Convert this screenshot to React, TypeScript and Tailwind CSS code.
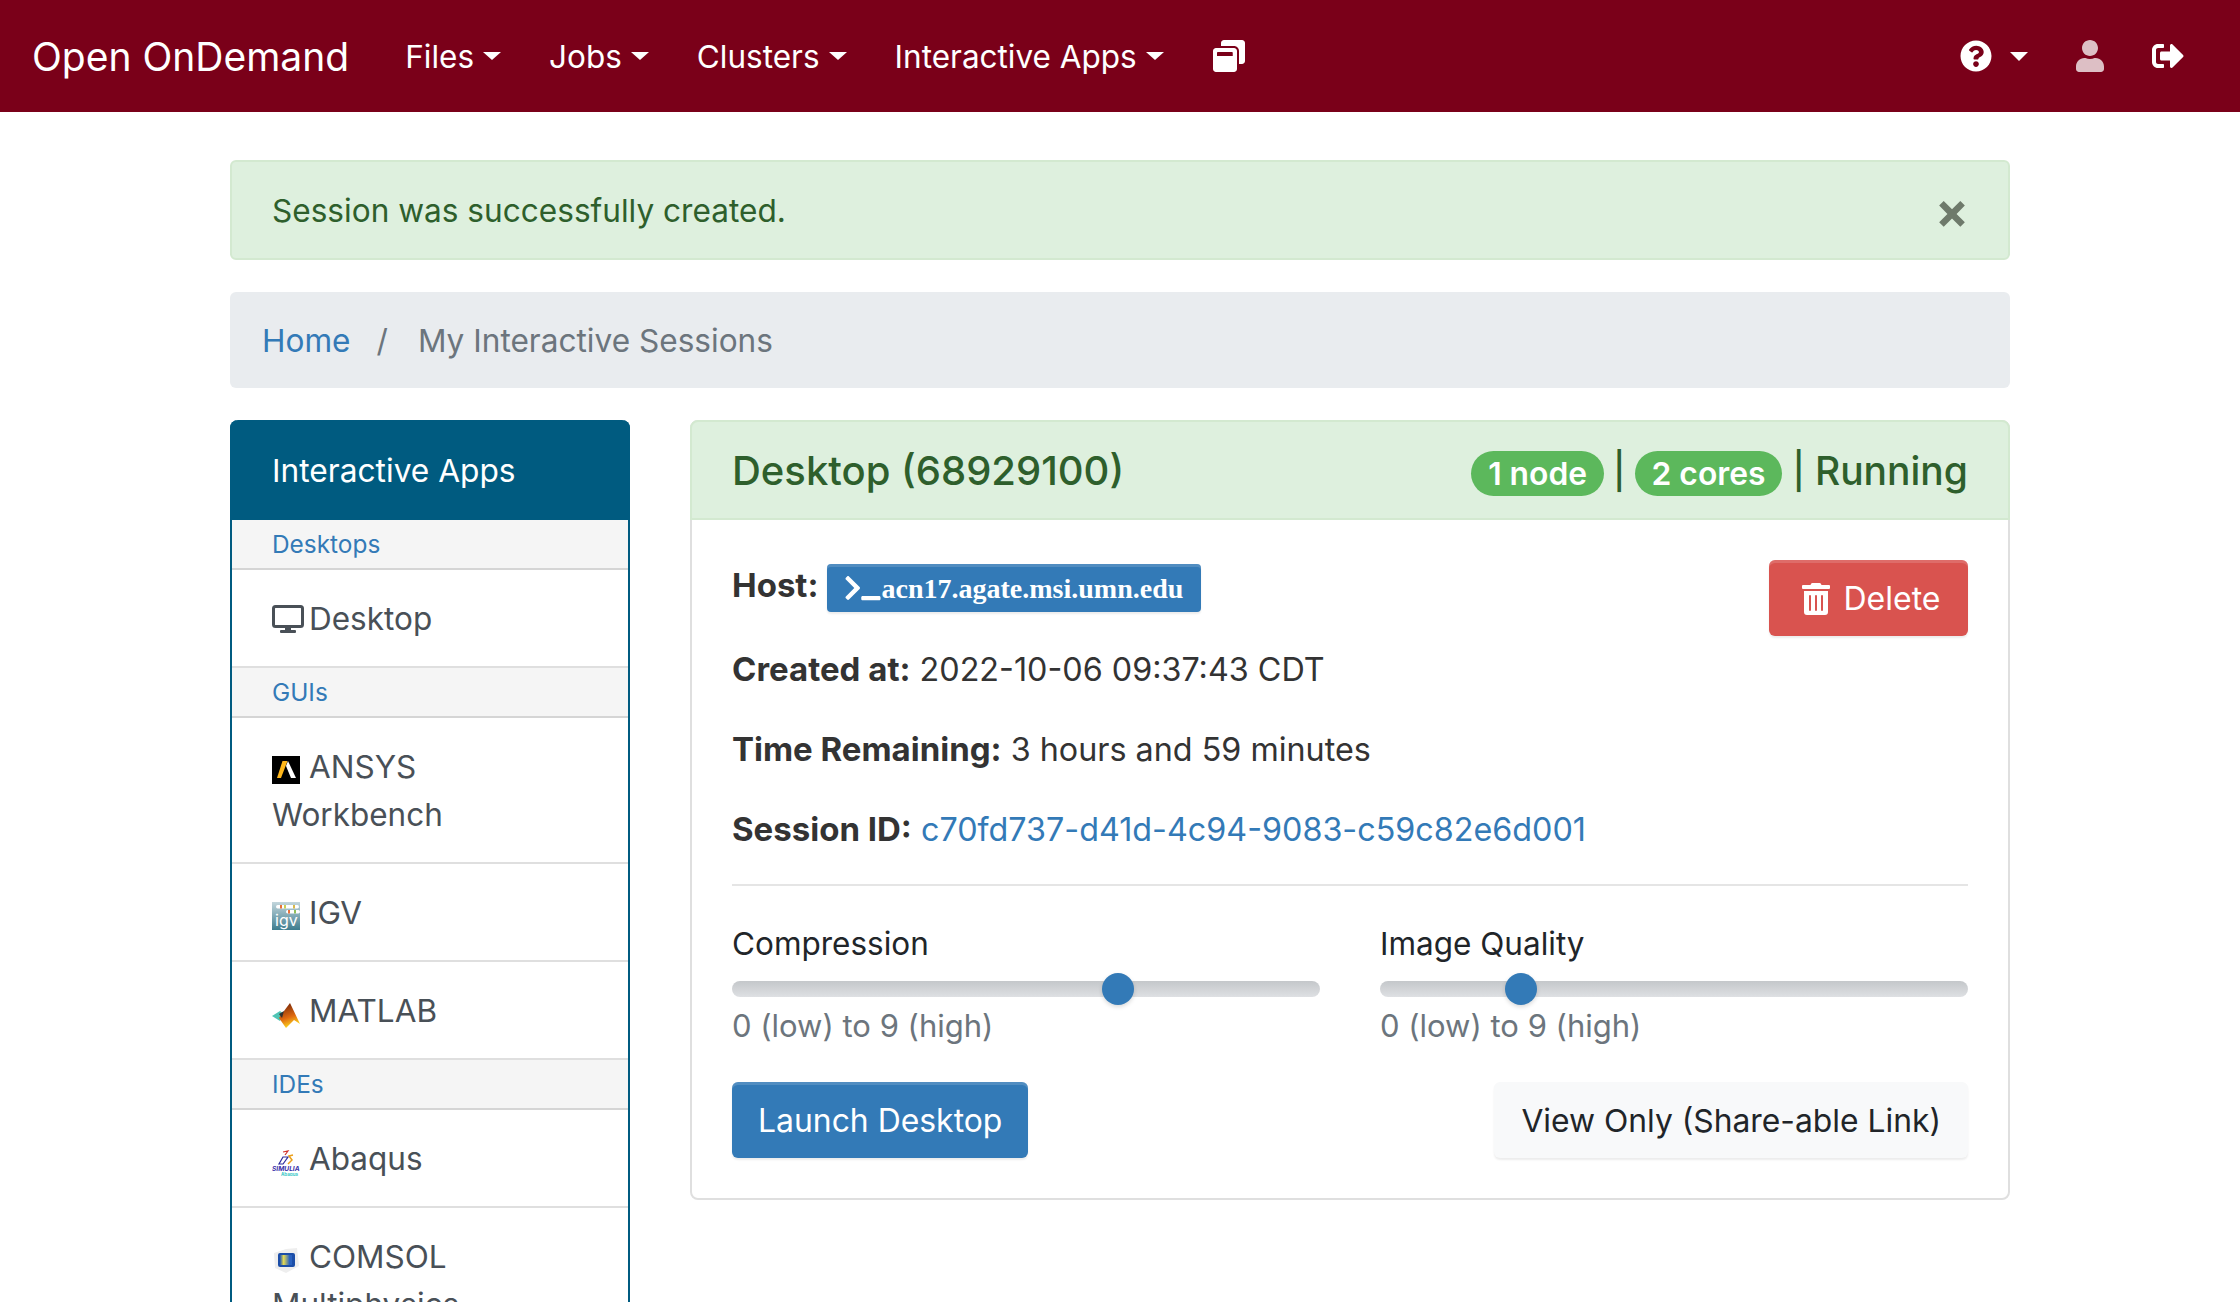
import { FaQuestionCircle, FaUser, FaSignOutAlt, FaWindowRestore, FaTrashAlt, FaTerminal } from "react-icons/fa";
import type { ReactNode } from "react";

const Caret = () => (
  <span className="ml-[9px] inline-block align-middle border-x-[9px] border-t-[8px] border-x-transparent border-t-white" />
);

const NavItem = ({ label }: { label: string }) => (
  <a className="flex items-center px-[12px] leading-none text-white">
    <span className="text-[31.5px] pt-[2px]">{label}</span>
    <Caret />
  </a>
);

const DesktopIcon = () => (
  <svg viewBox="0 0 32 28" className="w-[32px] h-[28px] -translate-y-[3px]">
    <rect x="1.5" y="1.5" width="29" height="20" rx="2" fill="none" stroke="#495057" strokeWidth="3" />
    <rect x="13" y="22" width="6" height="3" fill="#495057" />
    <rect x="8" y="25" width="16" height="3" rx="1" fill="#495057" />
  </svg>
);

const AnsysIcon = () => (
  <svg viewBox="0 0 28 28" className="w-[28px] h-[28px]">
    <rect width="28" height="28" fill="#000" />
    <path d="M5 22 L10.5 5 H15.5 L9 22 Z" fill="#ffb71b" />
    <path d="M16 5 L24 22 H19 L14 10 Z" fill="#fff" />
  </svg>
);

const IgvIcon = () => (
  <svg viewBox="0 0 28 28" className="w-[28px] h-[28px]">
    <defs>
      <linearGradient id="igvbg" x1="0" y1="0" x2="0" y2="1">
        <stop offset="0" stopColor="#c3d6dc" />
        <stop offset="1" stopColor="#3d7c8e" />
      </linearGradient>
    </defs>
    <rect width="28" height="28" fill="url(#igvbg)" />
    <rect x="4" y="3" width="23" height="3.5" rx="1.7" fill="#fff" />
    <rect x="14" y="8" width="14" height="3.5" rx="1.7" fill="#fff" />
    <rect x="8" y="3" width="2" height="3.5" fill="#e8703a" />
    <rect x="12" y="3" width="2" height="3.5" fill="#c9cf55" />
    <rect x="21" y="3" width="2" height="3.5" fill="#d8b84a" />
    <rect x="16" y="8" width="2" height="3.5" fill="#e8703a" />
    <rect x="22" y="8" width="2" height="3.5" fill="#8fbf5a" />
    <text x="3" y="24" fontSize="16" fill="#fff" fontFamily="Inter, sans-serif">igv</text>
  </svg>
);

const MatlabIcon = () => (
  <svg viewBox="0 0 28 28" className="w-[28px] h-[28px]">
    <defs>
      <linearGradient id="mlb" x1="0.2" y1="0" x2="0.5" y2="1">
        <stop offset="0" stopColor="#6e2208" />
        <stop offset="0.6" stopColor="#e06a10" />
        <stop offset="1" stopColor="#ffe020" />
      </linearGradient>
    </defs>
    <path d="M0 16 L8 11 L12 14 L8 21 Z" fill="#4fc4b4" />
    <path d="M7 18 L12 11 L18 3 L28 24 L22 20 L14 28 Z" fill="url(#mlb)" />
    <path d="M7 14 L12 11 L10 18 Z" fill="#333" />
  </svg>
);

const AbaqusIcon = () => (
  <svg viewBox="0 0 28 28" className="w-[28px] h-[28px]">
    <path d="M11 4 L16 3 L13 7" fill="none" stroke="#d0342c" strokeWidth="1.2" />
    <path d="M11 9 L16 9 L11 16 H7 Z" fill="none" stroke="#2c2c9c" strokeWidth="1.2" />
    <path d="M21 7 L17 8 L20 12 L16 16" fill="none" stroke="#eba01c" strokeWidth="1.5" />
    <text x="0" y="23" fontSize="6.6" fontWeight="700" fontStyle="italic" fill="#3a2fa8" fontFamily="Inter, sans-serif">SIMULIA</text>
    <text x="9" y="27.5" fontSize="4.5" fontWeight="700" fill="#37c6c6" fontFamily="Inter, sans-serif">Abaqus</text>
  </svg>
);

const ComsolIcon = () => (
  <svg viewBox="0 0 28 28" className="w-[28px] h-[28px]">
    <defs>
      <linearGradient id="cms" x1="0" y1="0" x2="1" y2="0">
        <stop offset="0" stopColor="#1e55b4" />
        <stop offset="0.3" stopColor="#e8dc50" />
        <stop offset="0.8" stopColor="#2a62c0" />
      </linearGradient>
    </defs>
    <path d="M2 7 L14 3 L25 2 L27 20 L14 27 L3 22 Z" fill="#eeeeee" />
    <rect x="6" y="7" width="17" height="14" rx="2" fill="#1c4ea8" />
    <rect x="8" y="9" width="12" height="10" fill="url(#cms)" />
  </svg>
);

const GroupHead = ({ label }: { label: string }) => (
  <div className="h-[50px] flex items-center bg-[#f5f5f5] border-b-2 border-[#d5d5d5] pl-[40px] pt-[1px] text-[24.4px] text-[#337ab7]">
    {label}
  </div>
);

const Item = ({ icon, children }: { icon: ReactNode; children: ReactNode }) => (
  <div className="border-b-2 border-[#dfdfdf] pl-[40px] pr-[24px] pt-[25px] pb-[23px] text-[31.5px] leading-[48px] text-[#495057]">
    <span className="inline-block w-[37px] align-[-6px]">{icon}</span>
    {children}
  </div>
);

const Slider = ({ label, left }: { label: string; left: string }) => (
  <div className="flex-1">
    <div className="text-[31.5px] leading-[48px] text-[#212529]">{label}</div>
    <div className="relative mt-[13px] h-[16px] rounded-full bg-[linear-gradient(#c4c7ca,#dee0e3)]">
      <div className={`absolute top-[-8px] ${left} w-[32px] h-[32px] rounded-full bg-[#337ab7] shadow-[0_2px_4px_rgba(0,0,0,0.15)]`} />
    </div>
    <div className="mt-[5px] text-[31px] leading-[48px] text-[#6c757d]">0 (low) to 9 (high)</div>
  </div>
);

const buttonShadow = "shadow-[inset_0_3px_0_rgba(255,255,255,0.15),0_2px_2px_rgba(0,0,0,0.075)]";

export default function App() {
  return (
    <div className="h-[1302px] overflow-hidden bg-white font-['Inter','Noto_Sans',sans-serif]">
      <nav className="h-[112px] bg-[#7a0019] flex items-center pl-[32px] pr-[56px] text-white">
        <a className="text-[39px] mr-[44px] pt-[2px]">Open OnDemand</a>
        <NavItem label="Files" />
        <div className="w-[24px]" />
        <NavItem label="Jobs" />
        <div className="w-[24px]" />
        <NavItem label="Clusters" />
        <div className="w-[24px]" />
        <NavItem label="Interactive Apps" />
        <a className="ml-[37px]">
          <FaWindowRestore className="w-[32px] h-[32px]" />
        </a>
        <div className="ml-auto flex items-center">
          <FaQuestionCircle className="w-[32px] h-[32px]" />
          <span className="ml-[18px] border-x-[9px] border-t-[9px] border-x-transparent border-t-white" />
          <FaUser className="ml-[48px] w-[28px] h-[32px] text-white/75" />
          <FaSignOutAlt className="ml-[48px] w-[32px] h-[32px]" />
        </div>
      </nav>

      <main className="mx-auto w-[1780px] pt-[48px]">
        <div className="h-[100px] flex items-center justify-between rounded-[6px] border-2 border-[#d3e9d0] bg-[#def0de] pl-[40px] pr-[39px] text-[31.6px] text-[#2e5f2c]">
          <span className="pt-[2px]">Session was successfully created.</span>
          <span className="text-[50px] leading-none font-bold text-[#6e7a6b]">×</span>
        </div>

        <div className="mt-[32px] h-[96px] flex items-center rounded-[6px] bg-[#e9ecef] pl-[32px] pt-[2px] text-[31.6px]">
          <a className="text-[#337ab7]">Home</a>
          <span className="ml-[26px] mr-[30px] text-[#6c757d]">/</span>
          <span className="text-[#6c757d]">My Interactive Sessions</span>
        </div>

        <div className="mt-[32px] flex gap-[60px] items-start">
          <aside className="w-[400px] shrink-0 rounded-t-[8px] border-x-2 border-[#005b80]">
            <div className="-mx-[2px] h-[100px] flex items-center rounded-t-[8px] bg-[#005b80] pl-[42px] pt-[2px] text-[31.7px] text-white">
              Interactive Apps
            </div>
            <GroupHead label="Desktops" />
            <Item icon={<DesktopIcon />}>Desktop</Item>
            <GroupHead label="GUIs" />
            <Item icon={<AnsysIcon />}>ANSYS<br />Workbench</Item>
            <Item icon={<IgvIcon />}>IGV</Item>
            <Item icon={<MatlabIcon />}>MATLAB</Item>
            <GroupHead label="IDEs" />
            <Item icon={<AbaqusIcon />}>Abaqus</Item>
            <Item icon={<ComsolIcon />}>COMSOL Multiphysics</Item>
          </aside>

          <section className="flex-1 rounded-[8px] border-2 border-[#dfdfdf]">
            <div className="-mx-[2px] -mt-[2px] h-[100px] flex items-center justify-between rounded-t-[8px] border-2 border-[#d3e9d0] bg-[#def0de] px-[40px] text-[#2e5f2c]">
              <span className="text-[40px] font-medium pt-[2px]">Desktop (68929100)</span>
              <span className="flex items-center text-[39px] font-medium pt-[2px]">
                <span className="flex items-center mt-[5px] h-[45px] rounded-full bg-[#5cb85c] px-[17px] text-[31.8px] font-semibold text-white">1 node</span>
                <span className="mx-[9px] text-[36px]">|</span>
                <span className="flex items-center mt-[5px] h-[45px] rounded-full bg-[#5cb85c] px-[17px] text-[31.8px] font-semibold text-white">2 cores</span>
                <span className="mx-[10px] text-[36px]">|</span>
                <span>Running</span>
              </span>
            </div>

            <div className="px-[40px] pt-[40px] pb-[40px]">
              <div className="flex justify-between items-start">
                <div className="text-[32.3px] text-[#333]">
                  <div className="flex items-center h-[52px]">
                    <b className="text-[33px]">Host:</b>
                    <span className={`ml-[9px] mt-[3px] flex items-center h-[48px] rounded-[4px] bg-[#337ab7] px-[18px] text-white font-['Liberation_Serif',serif] font-bold text-[28px] ${buttonShadow}`}>
                      <FaTerminal className="w-[36px] h-[28px]" />
                      <span className="pt-[2px]">acn17.agate.msi.umn.edu</span>
                    </span>
                  </div>
                </div>
                <a className={`flex items-center justify-center w-[199px] h-[76px] pl-[5px] pt-[2px] rounded-[6px] bg-[#d9534f] text-[32px] text-white ${buttonShadow}`}>
                  <FaTrashAlt className="w-[28px] h-[32px] mr-[14px]" />
                  Delete
                </a>
              </div>

              <div className="text-[32.3px] leading-[80px] text-[#333] -mt-[6px]">
                <div><b className="text-[33px] leading-none">Created at:</b> 2022-10-06 09:37:43 CDT</div>
                <div><b className="text-[33px] leading-none">Time Remaining:</b> 3 hours and 59 minutes</div>
                <div><b className="text-[33px] leading-none">Session ID:</b> <a className="text-[#337ab7]">c70fd737-d41d-4c94-9083-c59c82e6d001</a></div>
              </div>

              <hr className="mt-[14px] border-t-2 border-[#e5e5e5]" />

              <div className="mt-[34px] flex gap-[60px]">
                <Slider label="Compression" left="left-[370px]" />
                <Slider label="Image Quality" left="left-[125px]" />
              </div>

              <div className="mt-[32px] flex justify-between">
                <a className={`flex items-center h-[76px] rounded-[6px] bg-[#337ab7] px-[26px] pt-[2px] text-[31.9px] text-white ${buttonShadow}`}>Launch Desktop</a>
                <a className="flex items-center h-[76px] rounded-[6px] bg-[#f8f9fa] px-[27px] pt-[2px] text-[31.8px] text-[#212529] shadow-[0_2px_2px_rgba(0,0,0,0.075)]">View Only (Share-able Link)</a>
              </div>
            </div>
          </section>
        </div>
      </main>
    </div>
  );
}
